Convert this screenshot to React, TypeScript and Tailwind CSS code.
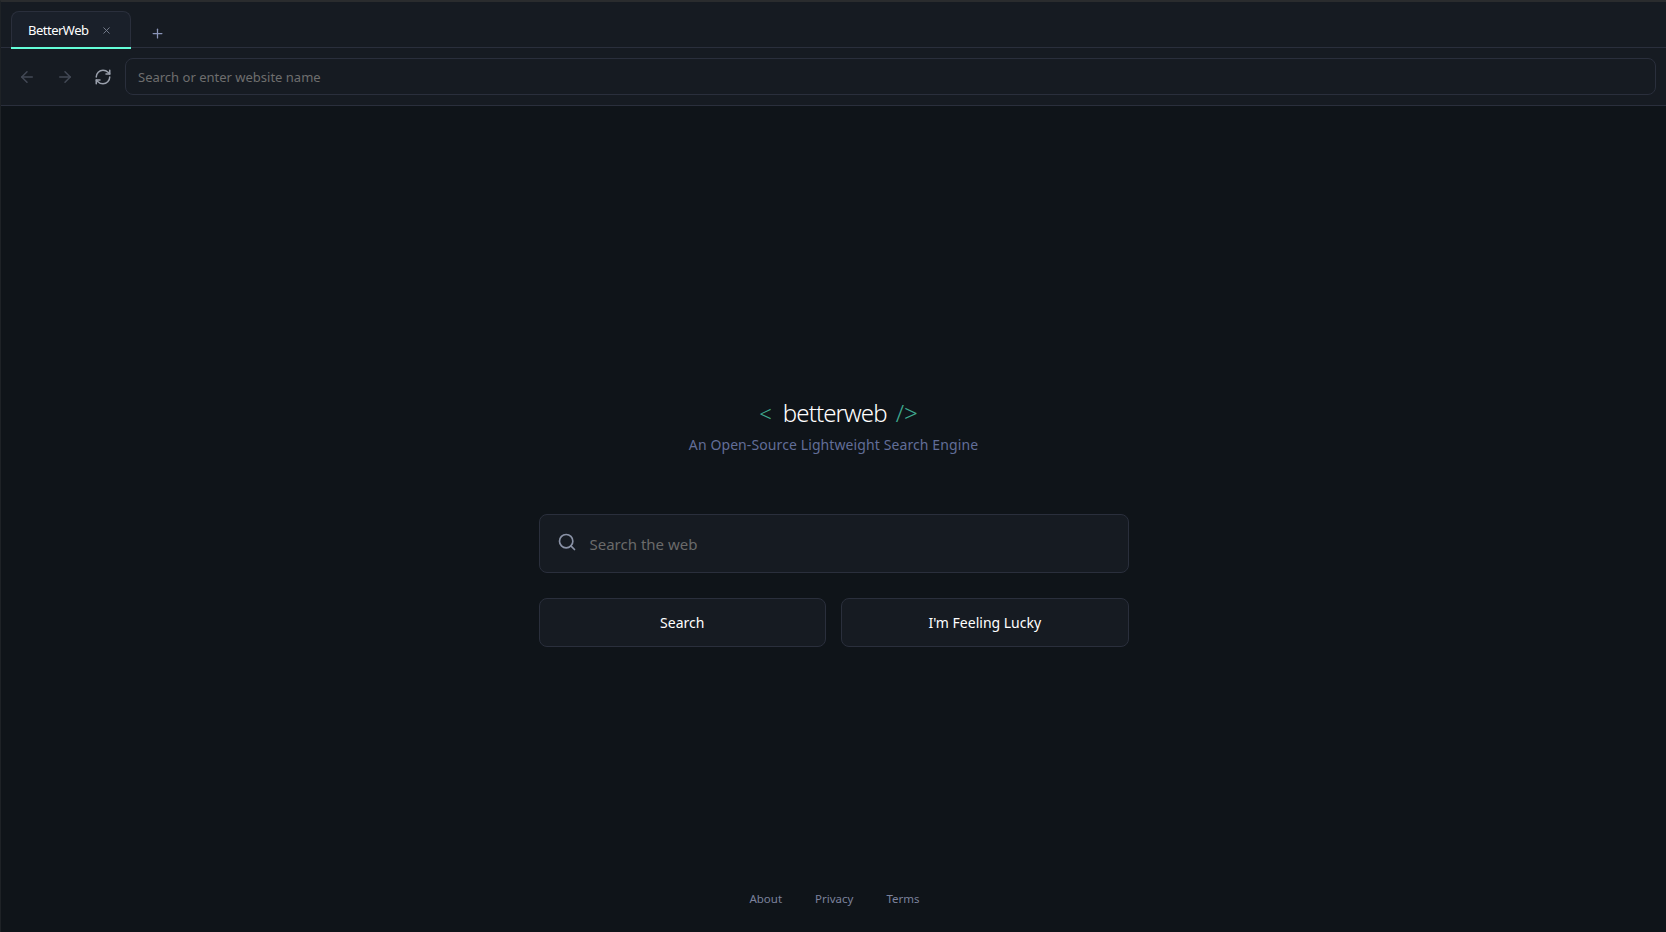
import { ArrowLeft, ArrowRight, RefreshCw, Search, X, Plus } from "lucide-react";

const font = "[font-family:'Noto_Sans',sans-serif]";

export default function App() {
  return (
    <div className={`flex h-[932px] w-[1666px] flex-col overflow-hidden border-t-2 border-l border-t-[#2a2c2e] border-l-[#1e2226] bg-[#0f1419] ${font}`}>
      <div className="flex h-[46px] shrink-0 items-end border-b border-[#2a2f3c] bg-[#161b22] pl-[10px]">
        <div className="relative -mb-px flex h-[37px] w-[120px] items-center rounded-t-lg border border-b-0 border-[#2a2f3c] bg-[#1a202a] pl-[16px] pt-[1px] text-[13px] text-white">
          <span className="tracking-[-0.5px]">BetterWeb</span>
          <X className="-mt-[1px] ml-[12px] text-[#7a8190]" size={11} />
          <div className="absolute -bottom-px -left-px -right-px h-[2px] bg-[#64ffda]" />
        </div>
        <Plus className="mb-[6px] ml-[19px] text-[#8a94b8]" size={15} />
      </div>
      <div className="flex h-[58px] shrink-0 items-center border-b border-[#2a2f3c] bg-[#161b22] pr-[10px]">
        <ArrowLeft className="ml-[17px] text-[#434956]" size={18} />
        <ArrowRight className="ml-[20px] text-[#434956]" size={18} />
        <RefreshCw className="ml-[20px] text-[#9aa0ac]" size={18} />
        <div className="ml-[13px] flex h-[37px] flex-1 items-center rounded-lg border border-[#2a2f3c] bg-[#161b22] pl-[12px] pt-[2px] text-[13px] text-[#6e6e6e]">
          Search or enter website name
        </div>
      </div>
      <main className="flex flex-1 flex-col items-center">
        <div className="ml-[10px] mt-[291px] flex items-center text-[24px] font-light leading-[32px] text-white">
          <span className="text-[22px] text-[#3fa98f]">&lt;</span>
          <span className="ml-[11px] tracking-[-0.9px]">betterweb</span>
          <span className="ml-[9px] text-[#3fa98f]">/&gt;</span>
        </div>
        <p className="mt-[6px] text-[14px] leading-[20px] tracking-[0.1px] text-[#626e98]">An Open-Source Lightweight Search Engine</p>
        <div className="mt-[59px] flex h-[59px] w-[590px] items-center rounded-lg border border-[#2a2f3c] bg-[#161b22] pl-[17px] pt-[1px] text-[15px] text-[#6a6a6a]">
          <Search className="-mt-[4px] text-[#8a92a6]" size={20} />
          <span className="ml-[13px]">Search the web</span>
        </div>
        <div className="mt-[25px] flex w-[590px] gap-[15px]">
          <button className="h-[49px] flex-1 rounded-lg border border-[#2a2f3c] bg-[#161b22] text-[14px] text-white">Search</button>
          <button className="h-[49px] flex-1 rounded-lg border border-[#2a2f3c] bg-[#161b22] text-[14px] text-white">I'm Feeling Lucky</button>
        </div>
        <div className="ml-[2px] mt-auto mb-[24px] flex gap-[33px] text-[11.5px] leading-[18px] text-[#7b829c]">
          <span>About</span>
          <span>Privacy</span>
          <span>Terms</span>
        </div>
      </main>
    </div>
  );
}
